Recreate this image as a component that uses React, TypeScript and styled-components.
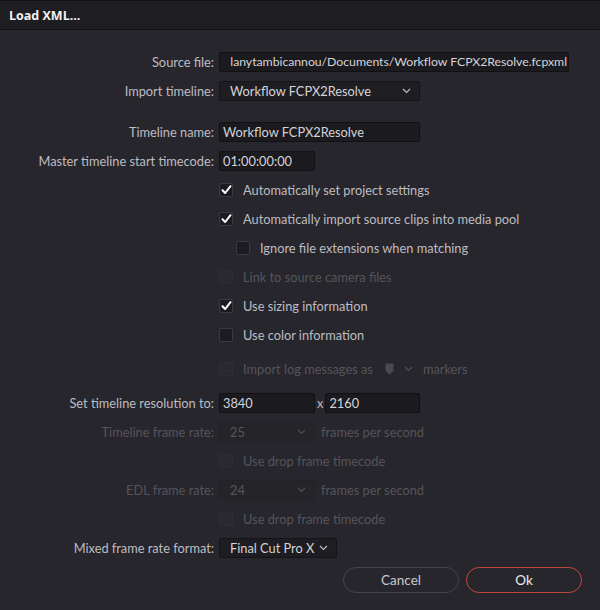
import React from "react";
import styled, { createGlobalStyle } from "styled-components";

const Global = createGlobalStyle`
  html, body { margin: 0; padding: 0; background: #27262c; }
  body { font-family: Lato, "Open Sans", sans-serif; }
`;

const Dialog = styled.div`
  width: 600px;
  height: 610px;
  background: #27262c;
  display: flex;
  flex-direction: column;
  overflow: hidden;
`;

const TitleBar = styled.div`
  height: 30px;
  flex: none;
  background: #1e1d22;
  border-top: 1px solid #101013;
  border-bottom: 1px solid #151418;
  display: flex;
  align-items: center;
  padding-left: 9px;
  color: #f2f2f2;
  font-family: "Open Sans", Lato, sans-serif;
  font-weight: 700;
  font-size: 12.5px;
  box-sizing: border-box;
`;

const Body = styled.div`
  flex: 1;
  display: flex;
  flex-direction: column;
  padding-top: 17px;
`;

const Row = styled.div<{ $gap?: number }>`
  display: grid;
  grid-template-columns: 214px 1fr;
  column-gap: 5px;
  height: 29px;
  align-items: center;
  margin-top: ${(p) => p.$gap ?? 0}px;
`;

const Label = styled.span<{ $disabled?: boolean }>`
  text-align: right;
  font-size: 12.8px;
  color: ${(p) => (p.$disabled ? "#55545b" : "#bdbcc1")};
  white-space: nowrap;
`;

const Controls = styled.div<{ $indent?: number }>`
  display: flex;
  align-items: center;
  gap: 6px;
  padding-left: ${(p) => p.$indent ?? 0}px;
  min-width: 0;
`;

const Field = styled.div<{ $w: number; $end?: boolean }>`
  width: ${(p) => p.$w}px;
  height: 20px;
  box-sizing: border-box;
  background: #1b1a1e;
  border: 1px solid #111013;
  border-radius: 2px;
  color: #d4d3d8;
  font-size: ${(p) => (p.$end ? 12.3 : 12.8)}px;
  letter-spacing: ${(p) => (p.$end ? -0.05 : 0)}px;
  line-height: 18px;
  padding: 0 ${(p) => (p.$end ? 1 : 0)}px 0 ${(p) => (p.$end ? 1 : 3)}px;
  white-space: nowrap;
  overflow: hidden;
  display: flex;
  justify-content: ${(p) => (p.$end ? "flex-end" : "flex-start")};
`;

const Select = styled.div<{ $w: number; $disabled?: boolean }>`
  width: ${(p) => p.$w}px;
  height: 20px;
  box-sizing: border-box;
  background: ${(p) => (p.$disabled ? "#252429" : "#1e1d22")};
  border: 1px solid ${(p) => (p.$disabled ? "#222126" : "#141317")};
  border-radius: 2px;
  color: ${(p) => (p.$disabled ? "#56555b" : "#d4d3d8")};
  font-size: 12.8px;
  display: flex;
  align-items: center;
  justify-content: space-between;
  padding: 0 8px 0 10px;
  white-space: nowrap;
`;

const Chevron = ({ color }: { color: string }) => (
  <svg width="9" height="6" viewBox="0 0 9 6">
    <path d="M1 1 L4.5 4.5 L8 1" fill="none" stroke={color} strokeWidth="1.2" />
  </svg>
);

const Box = styled.span<{ $disabled?: boolean }>`
  width: 14px;
  height: 14px;
  box-sizing: border-box;
  flex: none;
  border-radius: 2px;
  background: ${(p) => (p.$disabled ? "#2a292f" : "#1c1b20")};
  border: 1px solid ${(p) => (p.$disabled ? "#2e2d33" : "#3a393f")};
  display: flex;
  align-items: center;
  justify-content: center;
`;

const CheckText = styled.span<{ $disabled?: boolean }>`
  font-size: 12.8px;
  color: ${(p) => (p.$disabled ? "#55545b" : "#bdbcc1")};
  margin-left: 4px;
  white-space: nowrap;
`;

const Plain = styled.span<{ $disabled?: boolean; $mx?: number }>`
  font-size: 12.8px;
  color: ${(p) => (p.$disabled ? "#55545b" : "#bdbcc1")};
  white-space: nowrap;
  margin: 0 ${(p) => p.$mx ?? 0}px;
`;

const Spaced = styled.span<{ $ml: number }>`
  display: flex;
  align-items: center;
  margin-left: ${(p) => p.$ml}px;
`;

const Check = ({ on, disabled }: { on?: boolean; disabled?: boolean }) => (
  <Box $disabled={disabled}>
    {on && (
      <svg width="11" height="10" viewBox="0 0 11 10">
        <path d="M1.5 5.2 L4.2 8 L9.5 1.2" fill="none" stroke="#ffffff" strokeWidth="2" strokeLinecap="round" strokeLinejoin="round" />
      </svg>
    )}
  </Box>
);

const CheckRow = ({
  label,
  on,
  disabled,
  indent,
  gap,
  children,
}: {
  label: string;
  on?: boolean;
  disabled?: boolean;
  indent?: number;
  gap?: number;
  children?: React.ReactNode;
}) => (
  <Row $gap={gap}>
    <span />
    <Controls $indent={indent}>
      <Check on={on} disabled={disabled} />
      <CheckText $disabled={disabled}>{label}</CheckText>
      {children}
    </Controls>
  </Row>
);

const Marker = () => (
  <svg width="9" height="12" viewBox="0 0 9 12">
    <path d="M0.5 0.5 H8.5 V8 L4.5 11.5 L0.5 8 Z" fill="#4a494f" />
  </svg>
);

const Footer = styled.div`
  display: flex;
  justify-content: flex-end;
  gap: 7px;
  padding: 5px 18px 0 0;
`;

const Button = styled.button<{ $primary?: boolean }>`
  width: 116px;
  height: 26px;
  border-radius: 13px;
  background: #27262c;
  border: 1px solid ${(p) => (p.$primary ? "#c2463d" : "#45444a")};
  color: ${(p) => (p.$primary ? "#ececec" : "#c8c7cc")};
  font-family: Lato, "Open Sans", sans-serif;
  font-size: 13.5px;
  padding: 0;
`;

export default function App() {
  return (
    <Dialog>
      <Global />
      <TitleBar>Load XML...</TitleBar>
      <Body>
        <Row>
          <Label>Source file:</Label>
          <Controls>
            <Field $w={350} $end>
              <span>lanytambicannou/Documents/Workflow FCPX2Resolve.fcpxml</span>
            </Field>
          </Controls>
        </Row>
        <Row>
          <Label>Import timeline:</Label>
          <Controls>
            <Select $w={201}>
              Workflow FCPX2Resolve
              <Chevron color="#bdbcc1" />
            </Select>
          </Controls>
        </Row>
        <Row $gap={12}>
          <Label>Timeline name:</Label>
          <Controls>
            <Field $w={201}>Workflow FCPX2Resolve</Field>
          </Controls>
        </Row>
        <Row>
          <Label>Master timeline start timecode:</Label>
          <Controls>
            <Field $w={96}>01:00:00:00</Field>
          </Controls>
        </Row>
        <CheckRow label="Automatically set project settings" on />
        <CheckRow label="Automatically import source clips into media pool" on />
        <CheckRow label="Ignore file extensions when matching" indent={17} />
        <CheckRow label="Link to source camera files" disabled />
        <CheckRow label="Use sizing information" on />
        <CheckRow label="Use color information" />
        <CheckRow label="Import log messages as" disabled gap={5}>
          <Spaced $ml={6}>
            <Marker />
          </Spaced>
          <Spaced $ml={4}>
            <Chevron color="#4f4e55" />
          </Spaced>
          <Plain $disabled $mx={4}>markers</Plain>
        </CheckRow>
        <Row $gap={5}>
          <Label>Set timeline resolution to:</Label>
          <Controls>
            <Field $w={96}>3840</Field>
            <Plain $mx={-4}>x</Plain>
            <Field $w={95}>2160</Field>
          </Controls>
        </Row>
        <Row>
          <Label $disabled>Timeline frame rate:</Label>
          <Controls>
            <Select $w={96} $disabled>
              25
              <Chevron color="#4f4e55" />
            </Select>
            <Plain $disabled>frames per second</Plain>
          </Controls>
        </Row>
        <CheckRow label="Use drop frame timecode" disabled />
        <Row>
          <Label $disabled>EDL frame rate:</Label>
          <Controls>
            <Select $w={96} $disabled>
              24
              <Chevron color="#4f4e55" />
            </Select>
            <Plain $disabled>frames per second</Plain>
          </Controls>
        </Row>
        <CheckRow label="Use drop frame timecode" disabled />
        <Row>
          <Label>Mixed frame rate format:</Label>
          <Controls>
            <Select $w={118}>
              Final Cut Pro X
              <Chevron color="#bdbcc1" />
            </Select>
          </Controls>
        </Row>
        <Footer>
          <Button>Cancel</Button>
          <Button $primary>Ok</Button>
        </Footer>
      </Body>
    </Dialog>
  );
}
